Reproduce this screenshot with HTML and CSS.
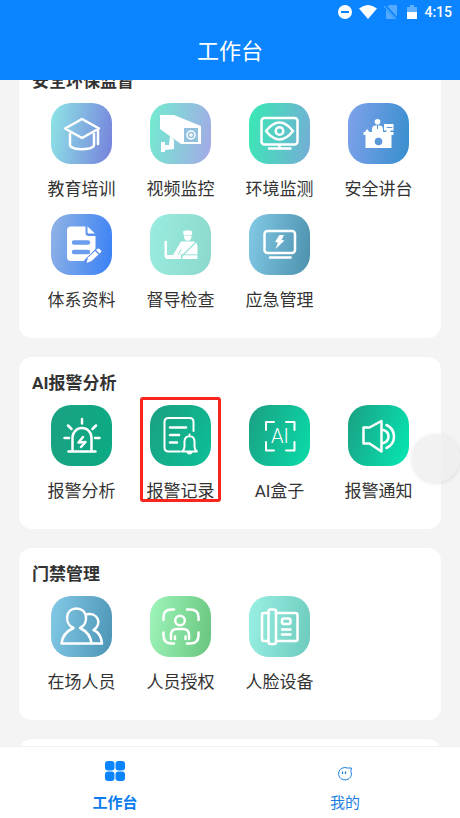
FILE: index.html
```html
<!DOCTYPE html>
<html lang="zh-CN">
<head>
<meta charset="utf-8">
<meta name="viewport" content="width=device-width, initial-scale=1">
<title>工作台</title>
<link rel="stylesheet" href="styles.css">
</head>
<body>
<header class="topbar">
  <div class="status">
    <svg width="14" height="14" viewBox="0 0 14 14"><circle cx="7" cy="7" r="7" fill="#fff"/><path d="M3 7h8" stroke="#0a84ff" stroke-width="2"/></svg>
    <svg width="18" height="14" viewBox="0 0 18 14"><path d="M0 3.500Q9-3.500 18 3.500L9 14z" fill="#fff"/></svg>
    <svg width="14" height="14" viewBox="0 0 14 14"><path d="M5 0h8v14H2V3z" fill="#fff" opacity=".3"/><path d="M1 1l12 13" stroke="#0a84ff" stroke-width="3"/><path d="M0 1l12 13" stroke="#6cb6ff" stroke-width="1"/></svg>
    <svg class="battery" width="10" height="14" viewBox="0 0 10 14"><path d="M0 2h3V0h4v2h3v5H0z" fill="#fff" opacity=".35"/><path d="M0 7h10v7H0z" fill="#fff"/></svg>
    <span>4:15</span>
  </div>
  <h1>工作台</h1>
</header>

<main class="content">
  <div class="list">
    <section class="card">
      <h2>安全环保监督</h2>
      <div class="grid">
        <a class="app" href="#"><span class="tile edu"><svg viewBox="0 0 61 61"><path d="M14 25.500 31 16l17 9.500L31 35zM19 30v12q0 2 5 3.500 7 1.500 14 0 5-1.500 5-3.500V30M47 28v13"/></svg></span>教育培训</a>
        <a class="app" href="#"><span class="tile video"><svg viewBox="0 0 61 61"><path class="solid" d="M10 12h14l27 11v18H31L10 26zM20 33l4 4v9l-9 1v2h-4V39h4v3h4z"/><path class="hole" d="M34 25h14v14H34z"/><circle cx="41" cy="32" r="4" stroke-width="1.500"/><circle class="solid" cx="41" cy="32" r="1.800"/></svg></span>视频监控</a>
        <a class="app" href="#"><span class="tile env"><svg viewBox="0 0 61 61"><rect x="12.500" y="15" width="36" height="26.500" rx="3"/><path d="M17 28q13.500-17 27 0-13.500 17-27 0zM30.500 42v3M20 45.500h21.500"/><circle cx="30.500" cy="28" r="3.800"/></svg></span>环境监测</a>
        <a class="app" href="#"><span class="tile desk"><svg viewBox="0 0 61 61"><circle class="solid" cx="29.500" cy="18.700" r="2.800"/><path class="solid" d="M24 29v-3q0-3.500 3.500-3.500h4Q35 22.500 35 26v3zM36 21h9.500v6.500h-3V29H38l1-1.500h-3zM17 29l2-3 2.500 3zM15.500 29h30v3h-30zM17.500 32h26v13h-26z"/><path d="M29.500 22.500v3" stroke="#5a98dc" stroke-width="1"/><path d="M39 24.500h5" stroke="#5a98dc" stroke-width="1"/><circle class="hole" cx="30.500" cy="38.500" r="3.800"/></svg></span>安全讲台</a>
        <a class="app" href="#"><span class="tile docs"><svg viewBox="0 0 61 61"><path class="solid" d="M20 12.500h14.500V19q0 3 3 3h7v16L36 47H20q-4 0-4-4V16.500q0-4 4-4zM36.500 12.500l7.500 7h-6q-1.500 0-1.500-1.500z"/><path d="M23 28.500h14M23 38h14" stroke="#6c9cec" stroke-width="4.500"/><path d="M37 48l10.500-10.500" stroke="#588fee" stroke-width="8"/><path class="solid" d="M35.500 49l1.500-5.500 7-6.500 3.500 3.500-7 6.500zM45 36l1.500-1.200q1-.8 2 .2l1.300 1.300q1 1 0 2l-1.300 1.200z"/></svg></span>体系资料</a>
        <a class="app" href="#"><span class="tile inspect"><svg viewBox="0 0 61 61"><path class="solid" d="M33 17.500q4.500-2.500 9.500 0l-.8 3.500h-8zM34 21.500h7.500v1q0 4-3.800 4.300Q34 26.500 34 22.500zM31 27.500h13q3.500 1 3.500 5V45H32.500v-4H23zM14.500 27h2.500v14h14v4H18q-3.500 0-3.500-3z"/><path d="M45.500 28.500L33 41" stroke="#94e2d7" stroke-width="1.300"/><path d="M31 35.500L28.500 40.500M31 40.800h16.500" stroke="#94e2d7" stroke-width="1"/></svg></span>督导检查</a>
        <a class="app" href="#"><span class="tile urgent"><svg viewBox="0 0 61 61"><rect x="15.500" y="17" width="30.500" height="22" rx="3"/><path d="M21 43.500h20.500"/><path class="solid" d="M30.500 21H35l-2.500 5 3 .5-9 8.500 2.500-6.500-3-.5z"/></svg></span>应急管理</a>
      </div>
    </section>

    <section class="card">
      <h2>AI报警分析</h2>
      <div class="grid">
        <a class="app" href="#"><span class="tile alarm"><svg viewBox="0 0 61 61"><path d="M21.500 46V32.500a9.500 9.500 0 0 1 19 0V46M17.500 46.500h27M31 14v4.500M17 20.500l3.500 3.500M45 20.500L41.500 24M13.500 33H18M44 33h4.500M32 32l-4.500 5.500 7-.5-4.500 5"/></svg></span>报警分析</a>
        <a class="app marked" href="#"><span class="tile record"><svg viewBox="0 0 61 61"><path stroke-width="2" d="M30 46.500H18.500q-4 0-4-4V17q0-4 4-4h21q4 0 4 4v9"/><path d="M20 22.500h16M20 30h9M20 37.500h7"/><path stroke-width="2" d="M32 46.500q2.500-2 2.500-5v-5q0-5 5-5.500 5 .5 5 5.500v5q0 3 2.500 5zM39.500 29.500V31M37.500 47.500q2 2 4 0"/></svg></span>报警记录</a>
        <a class="app" href="#"><span class="tile aibox"><svg viewBox="0 0 61 61"><path stroke-width="2" d="M17 25v-8h8M37 17h8.500v8M17 37v8.500h8M37 45.500h8.500V37"/><text x="31" y="37.500" text-anchor="middle">AI</text></svg></span>AI盒子</a>
        <a class="app" href="#"><span class="tile notify"><svg viewBox="0 0 61 61"><path d="M15.500 22.500h6l12-6.500v30.500l-12-8h-6zM35.500 25q5 1.500 5 6.500t-5 6.500M38.500 20q7.500 3.500 7.500 11.500t-7.500 11.500"/></svg></span>报警通知</a>
      </div>
    </section>

    <section class="card">
      <h2>门禁管理</h2>
      <div class="grid">
        <a class="app" href="#"><span class="tile people"><svg viewBox="0 0 61 61"><path d="M22.500 32C13 28 14 12.500 25.500 12.500S38 28 29 32Q39.500 37 40.500 47.500h-30Q11.500 37 22.500 32zM34.500 18.500c13-3 17 10 8 15.500q7.500 3 8.500 13.500H40.500"/></svg></span>在场人员</a>
        <a class="app" href="#"><span class="tile auth"><svg viewBox="0 0 61 61"><path d="M13.500 24v-3q0-7.500 8-7.500h2.500M37 13.500h3q8.500 0 8.500 7.500v3M13.500 36.500v3q0 8 8 8h2.500M37 47.500h3q8.500 0 8.500-8v-3M21 43v-4q0-6 6-6h6q6 0 6 6v4M25 40.500V43M35.500 40.500V43"/><circle cx="30" cy="24.500" r="4.800"/></svg></span>人员授权</a>
        <a class="app" href="#"><span class="tile face"><svg viewBox="0 0 61 61"><path d="M19.500 17H15q-2 0-2 2v24q0 2 2 2h4.500M27 17h19.500q2 0 2 2v24q0 2-2 2H27"/><rect x="19.500" y="13.500" width="7.500" height="34.500" rx="2"/><rect x="33" y="22.500" width="8.500" height="5.500" rx="2"/><path d="M33 33.500h8.500M33 38.500h8.500"/></svg></span>人脸设备</a>
      </div>
    </section>

    <section class="card"></section>
  </div>
</main>

<button class="float" type="button" aria-label="悬浮按钮"></button>

<nav class="tabs">
  <a class="tab active" href="#"><span class="tab-icon"><svg width="20" height="20" viewBox="0 0 20 20" fill="#0a84ff"><rect width="9.500" height="9.500" rx="3"/><rect x="10.500" width="9.500" height="9.500" rx="3"/><rect y="10.500" width="9.500" height="9.500" rx="3"/><rect x="10.500" y="10.500" width="9.500" height="9.500" rx="3"/></svg></span>工作台</a>
  <a class="tab" href="#"><span class="tab-icon"><svg width="14" height="14" viewBox="0 0 14 14" fill="none" stroke="#1c7fe0"><path d="M9.500 1H13.500l-.7 3.500q.7 1.200.7 2.800a6.500 6.200 0 1 1-4-6.300z" stroke-linejoin="round"/><path d="M4.500 4.500v2.500M7.500 4.500v2.500" stroke-width="1.300"/></svg></span>我的</a>
</nav>
</body>
</html>
```

FILE: styles.css
```css
* {
  box-sizing: border-box;
}

body {
  display: flex;
  flex-direction: column;
  height: 100vh;
  margin: 0;
  background: #f4f4f4;
  color: #333;
  font-family: Roboto, "Noto Sans CJK SC", sans-serif;
}

a {
  color: inherit;
  text-decoration: none;
}

.topbar {
  flex: none;
  background: #0a84ff;
  color: #fff;
}

.status {
  display: flex;
  align-items: center;
  justify-content: flex-end;
  gap: 7px;
  height: 24px;
  padding-right: 8px;
  font-size: 14px;
  font-weight: 500;
}

.battery {
  margin-left: 2px;
}

.topbar h1 {
  margin: 0;
  font-size: 22px;
  font-weight: 400;
  line-height: 56px;
  text-align: center;
}

.content {
  flex: 1;
  min-height: 0;
  overflow: hidden;
}

/* The list is shown part-way through its scroll. */
.list {
  display: flex;
  flex-direction: column;
  gap: 19px;
  margin-top: -25px;
  padding: 0 19px;
}

.card {
  padding: 13px 13px 26px;
  border-radius: 13px;
  background: #fff;
}

.card h2 {
  margin: 0 0 9px;
  font-size: 17px;
  font-weight: 700;
  line-height: 26px;
}

.grid {
  display: grid;
  grid-template-columns: repeat(4, 1fr);
  row-gap: 13px;
}

.app {
  position: relative;
  display: flex;
  flex-direction: column;
  align-items: center;
  gap: 13px;
  font-size: 17px;
  line-height: 24px;
}

.marked::after {
  content: "";
  position: absolute;
  inset: -8px 9px 1px;
  border: 3px solid #f8261f;
  border-radius: 3px;
}

.tile {
  width: 61px;
  height: 61px;
  border-radius: 20px;
}

.tile svg {
  display: block;
  fill: none;
  stroke: #fff;
  stroke-width: 2.5;
  stroke-linecap: round;
  stroke-linejoin: round;
}

.tile .solid {
  fill: #fff;
  stroke: none;
}

.tile .hole {
  stroke: none;
}

.tile text {
  fill: #fff;
  stroke: none;
  font-size: 20px;
  font-weight: 300;
}

.edu { background: linear-gradient(100deg, #8ee6e6, #7680dc); }
.video { background: linear-gradient(100deg, #72ecd0, #a4a8e6); }
.video .hole { fill: #93c0de; }
.env { background: linear-gradient(100deg, #38eab4, #76acd6); }
.desk { background: linear-gradient(100deg, #80a2ea, #368ece); }
.desk .hole { fill: #5a98dc; }
.docs { background: linear-gradient(100deg, #92b4e4, #3880f6); }
.inspect { background: linear-gradient(100deg, #9aece0, #8cd8cc); }
.urgent { background: linear-gradient(100deg, #82cae6, #4c90ac); }
.alarm { background: linear-gradient(100deg, #1aa282, #0caa84); }
.record { background: linear-gradient(120deg, #1a9f82, #0cc096); }
.aibox { background: linear-gradient(110deg, #1a9f82, #0adcaa); }
.notify { background: linear-gradient(110deg, #1a9f82, #06e8b4); }
.people { background: linear-gradient(100deg, #82cae6, #4c94b4); }
.auth { background: linear-gradient(100deg, #9ef6ba, #68c47e); }
.face { background: linear-gradient(100deg, #9af0e4, #6ccabc); }

.float {
  position: absolute;
  top: 434px;
  right: 0;
  width: 48px;
  height: 48px;
  padding: 0;
  border: 0;
  border-radius: 50%;
  background: rgba(238, 238, 238, 0.75);
  box-shadow: 0 1px 4px rgba(0, 0, 0, 0.12);
}

.tabs {
  display: flex;
  flex: none;
  padding: 14px 0 5px;
  border-top: 1px solid #f0f0f0;
  background: #fff;
}

.tab {
  display: flex;
  flex: 1;
  flex-direction: column;
  align-items: center;
  gap: 12px;
  color: #1c7fe0;
  font-size: 15px;
  line-height: 20px;
}

.tab.active {
  color: #0a7cf0;
  font-weight: 700;
}

.tab-icon {
  display: flex;
  align-items: flex-end;
  height: 20px;
}
```
